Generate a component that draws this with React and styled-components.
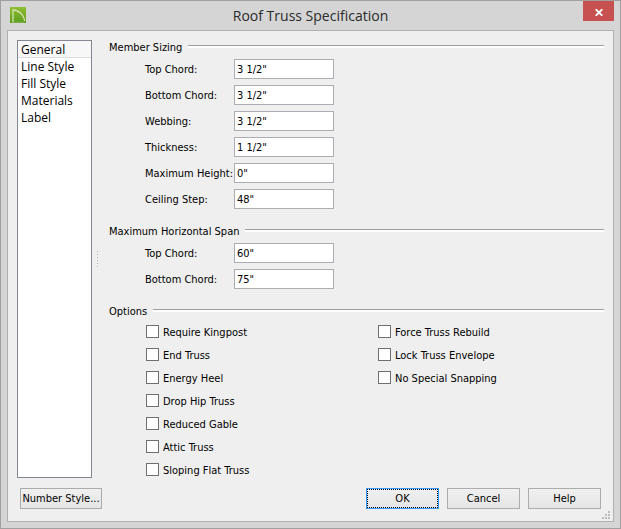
import React, { useState } from 'react';
import styled, { createGlobalStyle } from 'styled-components';

const pages = ['General', 'Line Style', 'Fill Style', 'Materials', 'Label'];

const sizingFields = [
    { id: 'sizing-top', label: 'Top Chord:', value: '3 1/2"' },
    { id: 'sizing-bottom', label: 'Bottom Chord:', value: '3 1/2"' },
    { id: 'sizing-webbing', label: 'Webbing:', value: '3 1/2"' },
    { id: 'sizing-thickness', label: 'Thickness:', value: '1 1/2"' },
    { id: 'sizing-height', label: 'Maximum Height:', value: '0"' },
    { id: 'sizing-step', label: 'Ceiling Step:', value: '48"' },
];

const spanFields = [
    { id: 'span-top', label: 'Top Chord:', value: '60"' },
    { id: 'span-bottom', label: 'Bottom Chord:', value: '75"' },
];

const trussOptions = [
    'Require Kingpost',
    'End Truss',
    'Energy Heel',
    'Drop Hip Truss',
    'Reduced Gable',
    'Attic Truss',
    'Sloping Flat Truss',
];

const editOptions = ['Force Truss Rebuild', 'Lock Truss Envelope', 'No Special Snapping'];

const Fields = ({ items }) => (
    <FieldList>
        {items.map((item) => (
            <Field key={item.id}>
                <FieldLabel htmlFor={item.id}>{item.label}</FieldLabel>
                <TextBox id={item.id} type="text" defaultValue={item.value} />
            </Field>
        ))}
    </FieldList>
)

const Options = ({ items }) => (
    <OptionList>
        {items.map((item) => (
            <Option key={item}>
                <CheckBox type="checkbox" />
                {item}
            </Option>
        ))}
    </OptionList>
)

const App = () => {
    const [page, setPage] = useState('General');

    return (
        <>
            <GlobalStyle />
            <Frame>
                <TitleBar>
                    <AppIcon viewBox="0 0 16 16" aria-hidden="true">
                        <defs>
                            <linearGradient id="leaf" x1="0" y1="0" x2="0" y2="1">
                                <stop offset="0" stopColor="#8fbf35" />
                                <stop offset="1" stopColor="#5c9a1c" />
                            </linearGradient>
                        </defs>
                        <rect width="16" height="16" fill="url(#leaf)" />
                        <path d="M3 15.5V3C9 3.2 14 8 14.8 14" fill="none" stroke="#d3e2ae" strokeWidth="1.3" />
                        <path d="M3 15.2H14.5" fill="none" stroke="#86b556" strokeWidth="1" />
                    </AppIcon>
                    <Title>Roof Truss Specification</Title>
                    <CloseButton aria-label="Close">
                        <svg width="8" height="7" viewBox="0 0 8 7" aria-hidden="true">
                            <path d="M0.7 0.2L7.3 6.8M7.3 0.2L0.7 6.8" stroke="#fff" strokeWidth="1.9" />
                        </svg>
                    </CloseButton>
                </TitleBar>
                <Client>
                    <Body>
                        <PageList>
                            {pages.map((name) => (
                                <PageItem key={name} $active={name === page} onClick={() => setPage(name)}>
                                    {name}
                                </PageItem>
                            ))}
                        </PageList>
                        <Splitter>
                            <svg width="2" height="17" viewBox="0 0 2 17" aria-hidden="true">
                                <path d="M0.5 0V17" stroke="#b4b4b4" strokeDasharray="1 2" />
                            </svg>
                        </Splitter>
                        <Panel>
                            <section>
                                <Heading>Member Sizing</Heading>
                                <Fields items={sizingFields} />
                            </section>
                            <section>
                                <Heading>Maximum Horizontal Span</Heading>
                                <Fields items={spanFields} />
                            </section>
                            <section>
                                <Heading>Options</Heading>
                                <OptionColumns>
                                    <Options items={trussOptions} />
                                    <Options items={editOptions} />
                                </OptionColumns>
                            </section>
                        </Panel>
                    </Body>
                    <Footer>
                        <StyleButton>Number Style...</StyleButton>
                        <Actions>
                            <DefaultButton>OK</DefaultButton>
                            <Button>Cancel</Button>
                            <Button>Help</Button>
                        </Actions>
                    </Footer>
                    <Grip width="8" height="8" viewBox="0 0 8 8" aria-hidden="true">
                        <path d="M6 0h2v2H6zM3 3h2v2H3zM6 3h2v2H6zM0 6h2v2H0zM3 6h2v2H3zM6 6h2v2H6z" fill="#bcbcbc" />
                    </Grip>
                </Client>
            </Frame>
        </>
    )
}

const GlobalStyle = createGlobalStyle`
  * {
    box-sizing: border-box;
  }

  body {
    margin: 0;
    color: #000;
    font-family: "DejaVu Sans Condensed", Tahoma, sans-serif;
    font-size: 11px;
    line-height: 16px;
  }

  button, input {
    font: inherit;
    color: inherit;
  }
`;

const Frame = styled.div`
  display: flex;
  flex-direction: column;
  min-height: 100vh;
  padding: 0 6px 6px;
  background: #d5d5d5;
  border: 1px solid #a0a0a0;
`;

const TitleBar = styled.header`
  display: grid;
  grid-template-columns: 1fr auto 1fr;
  height: 29px;
`;

const AppIcon = styled.svg`
  width: 16px;
  height: 16px;
  margin: 6px 3px;
`;

const Title = styled.h1`
  margin: 0;
  color: #2b2b2b;
  font-family: "Open Sans", "Segoe UI", sans-serif;
  font-size: 14px;
  font-weight: 400;
  line-height: 29px;
`;

const CloseButton = styled.button`
  display: flex;
  align-items: center;
  justify-content: center;
  justify-self: end;
  width: 31px;
  height: 20px;
  padding: 2px 0 0;
  background: #c75050;
  border: 0;
`;

const Client = styled.main`
  position: relative;
  display: flex;
  flex: 1;
  flex-direction: column;
  gap: 10px;
  padding: 9px 9px 12px;
  background: #efefef;
  border: 1px solid #b0b0b0;
`;

const Body = styled.div`
  display: flex;
  flex: 1;
`;

const PageList = styled.nav`
  display: flex;
  flex-direction: column;
  width: 75px;
  background: #fff;
  border: 1px solid #828790;
`;

const PageItem = styled.button`
  height: 17px;
  padding: 1px 3px 0;
  background: ${(props) => (props.$active ? '#f7f7f7' : 'transparent')};
  border: 0;
  border-bottom: 1px solid ${(props) => (props.$active ? '#dedede' : 'transparent')};
  font-family: "Open Sans", "Segoe UI", sans-serif;
  font-size: 12px;
  line-height: 16px;
  text-align: left;
`;

const Splitter = styled.div`
  display: flex;
  align-items: center;
  width: 17px;
  padding-left: 5px;
`;

const Panel = styled.div`
  display: flex;
  flex: 1;
  flex-direction: column;
  gap: 15px;
`;

const Heading = styled.h2`
  display: flex;
  gap: 6px;
  height: 14px;
  margin: 0 0 5px;
  font-size: 11px;
  font-weight: 400;

  &::after {
    content: "";
    flex: 1;
    height: 2px;
    margin-top: 5px;
    background: #fff;
    border-top: 1px solid #a0a0a0;
  }
`;

const FieldList = styled.div`
  display: flex;
  flex-direction: column;
  gap: 6px;
  padding-left: 36px;
`;

const Field = styled.div`
  display: grid;
  grid-template-columns: 89px 100px;
  align-items: center;
  white-space: nowrap;
`;

const FieldLabel = styled.label`
  padding-top: 2px;
`;

const TextBox = styled.input`
  width: 100%;
  height: 20px;
  padding: 0 2px;
  background: #fff;
  border: 1px solid #abadb3;
  outline: 0;
`;

const OptionColumns = styled.div`
  display: grid;
  grid-template-columns: 232px 1fr;
  padding: 2px 0 0 37px;
`;

const OptionList = styled.div`
  display: flex;
  flex-direction: column;
  align-items: flex-start;
  gap: 10px;
`;

const Option = styled.label`
  display: flex;
  gap: 4px;
  height: 13px;
  line-height: 15px;
`;

const CheckBox = styled.input`
  appearance: none;
  width: 13px;
  height: 13px;
  margin: 0;
  background: #fff;
  border: 1px solid #707070;

  &:checked {
    box-shadow: inset 0 0 0 2px #fff;
    background: #222;
  }
`;

const Footer = styled.footer`
  display: flex;
  justify-content: space-between;
  padding: 0 3px;
`;

const Actions = styled.div`
  display: flex;
  gap: 8px;
`;

const Button = styled.button`
  width: 73px;
  height: 21px;
  padding: 1px 0 0;
  background: linear-gradient(#f0f0f0, #e5e5e5);
  border: 1px solid #acacac;
  white-space: nowrap;
`;

const DefaultButton = styled(Button)`
  border-color: #3399ff;
  outline: 1px dotted #000;
  outline-offset: -2px;
`;

const StyleButton = styled(Button)`
  width: 82px;
`;

const Grip = styled.svg`
  position: absolute;
  right: 3px;
  bottom: 2px;
`;

export default App
